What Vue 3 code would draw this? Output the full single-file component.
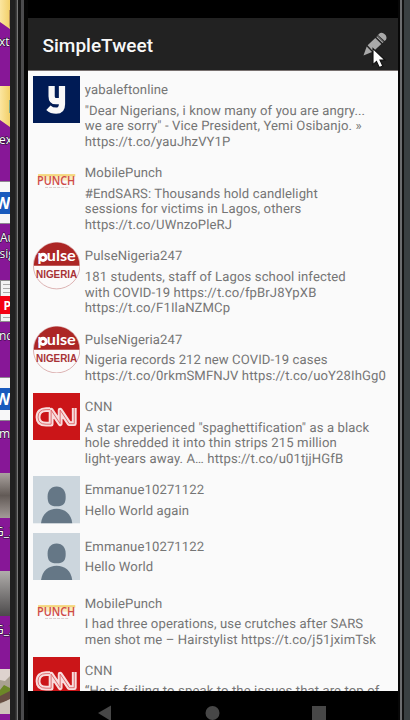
<script setup>
const tweets = [
  { name: 'yabaleftonline', avatar: 'yaba', lines: ['"Dear Nigerians, i know many of you are angry...', 'we are sorry" - Vice President, Yemi Osibanjo. »', 'https://t.co/yauJhzVY1P'] },
  { name: 'MobilePunch', avatar: 'punch', lines: ['#EndSARS: Thousands hold candlelight', 'sessions for victims in Lagos, others', 'https://t.co/UWnzoPleRJ'] },
  { name: 'PulseNigeria247', avatar: 'pulse', lines: ['181 students, staff of Lagos school infected', 'with COVID-19 https://t.co/fpBrJ8YpXB', 'https://t.co/F1IlaNZMCp'] },
  { name: 'PulseNigeria247', avatar: 'pulse', lines: ['Nigeria records 212 new COVID-19 cases', 'https://t.co/0rkmSMFNJV https://t.co/uoY28IhGg0'] },
  { name: 'CNN', avatar: 'cnn', lines: ['A star experienced "spaghettification" as a black', 'hole shredded it into thin strips 215 million', 'light-years away. A… https://t.co/u01tjjHGfB'] },
  { name: 'Emmanue10271122', avatar: 'person', lines: ['Hello World again'] },
  { name: 'Emmanue10271122', avatar: 'person', lines: ['Hello World'] },
  { name: 'MobilePunch', avatar: 'punch', lines: ['I had three operations, use crutches after SARS', 'men shot me – Hairstylist https://t.co/j51jximTsk'] },
  { name: 'CNN', avatar: 'cnn', lines: ['“He is failing to speak to the issues that are top of'] },
]
</script>

<template>
  <div class="stage">
    <svg class="desktop" width="10" height="720" viewBox="0 0 10 720">
      <defs>
        <linearGradient id="folder" x1="0" x2="1">
          <stop offset="0" stop-color="#fbe6a0" />
          <stop offset="1" stop-color="#f2cf68" />
        </linearGradient>
        <linearGradient id="photo" x1="0" y1="0" x2="0" y2="1">
          <stop offset="0" stop-color="#aaa39f" />
          <stop offset=".5" stop-color="#625a56" />
          <stop offset="1" stop-color="#a39b98" />
        </linearGradient>
        <linearGradient id="photo2" x1="0" y1="0" x2="0" y2="1">
          <stop offset="0" stop-color="#b0adab" />
          <stop offset="1" stop-color="#4c4a4b" />
        </linearGradient>
      </defs>
      <rect width="10" height="720" fill="#871797" />
      <path d="M0 0H10V29L0 22Z" fill="url(#folder)" />
      <path d="M9 10H10V28L9 26Z" fill="#b9925a" />
      <path d="M0 86H10V127L0 120Z" fill="url(#folder)" />
      <path d="M9 100H10V113H9Z" fill="#7fa98c" />
      <rect y="181" width="10" height="43" fill="#8d8790" />
      <rect y="182" width="10" height="41" fill="#f7f7f8" />
      <rect y="192" width="10" height="22" fill="#195abd" />
      <text x="-5" y="208.500" class="badge">W</text>
      <rect y="280" width="10" height="42" fill="#8e8e8e" />
      <rect x="1" y="281" width="9" height="40" fill="#f4f4f4" />
      <path d="M3 284.500H10M3 288.500H10M3 292.500H10M3 317.500H10" stroke="#aaa" />
      <rect y="296" width="10" height="18" fill="#f30012" />
      <text x="3.500" y="309.500" class="badge small">P</text>
      <rect y="377" width="10" height="44" fill="#8d8790" />
      <rect y="378" width="10" height="42" fill="#f7f7f8" />
      <rect y="388" width="10" height="22" fill="#195abd" />
      <text x="-5" y="404.500" class="badge">W</text>
      <rect y="473" width="10" height="45" fill="url(#photo)" />
      <rect y="571" width="10" height="45" fill="url(#photo2)" />
      <rect y="669" width="10" height="45" fill="#aaa192" />
      <path d="M0 669H10V676L5 681L0 680Z" fill="#ded3ce" />
      <path d="M0 690L4 685L10 688V696L5 697L0 701Z" fill="#6c8727" />
      <path d="M0 696L10 691V700L0 703Z" fill="#674d42" />
      <path d="M0 704L10 699V714H0Z" fill="#cfc4bb" />
      <g class="label">
        <text x="-1" y="46">xt</text>
        <text x="-1" y="143.500">ex</text>
        <text x="0" y="242">Au</text>
        <text x="-.5" y="257.500">sig</text>
        <text x="-1" y="340">nd</text>
        <text x="-1" y="438">m</text>
        <text x="-5" y="536">G_2</text>
        <text x="-5" y="634">G_2</text>
      </g>
    </svg>
    <div class="bezel left"></div>
    <main class="screen">
      <div class="status"></div>
      <header class="bar">
        <h1>SimpleTweet</h1>
        <svg class="compose" width="38" height="42" viewBox="0 0 38 42">
          <g fill="#a9a9a9">
            <path d="M8.500 28.500L11.700 19.500L17 25Z" />
            <path d="M12.600 18.300L20.300 10.900L26.300 17.100L18.300 24.400Z" />
            <path d="M24.200 6.800C27 3.500 33.500 8.700 31 12.700L29.700 14L23 7.900Z" />
            <path d="M21.300 10.100L22.200 9.200L28.400 15.200L27.500 16.100Z" />
          </g>
          <path d="M22.500 8.600L29.100 14.800" stroke="#777" stroke-width=".7" />
          <path d="M18 21.500V37.700L21.500 34.400L24.300 40.600L27.800 39L25 33H30Z" fill="#fff" stroke="#111" stroke-width="1.100" />
        </svg>
      </header>
      <section class="feed">
        <article v-for="(t, i) in tweets" :key="i" class="tweet">
          <svg v-if="t.avatar === 'yaba'" class="avatar" viewBox="0 0 47 47">
            <rect width="47" height="47" fill="#001b55" />
            <path d="M18.500 10V20Q18.500 25 23 25H27.500M28.800 10V28Q28.800 34.500 23 34.500Q18.500 34.500 15.300 31.500" fill="none" stroke="#f8f8f8" stroke-width="6.200" />
          </svg>
          <svg v-else-if="t.avatar === 'punch'" class="avatar" viewBox="0 0 47 47">
            <rect x="5" y="15" width="37" height="2.500" fill="#f4d77d" />
            <rect x="6" y="17.500" width="35" height="4" fill="#fae9bc" />
            <text x="4" y="26" class="punch" textLength="38" lengthAdjust="spacingAndGlyphs">PUNCH</text>
            <path d="M12 28.300H36" stroke="#d6c6c6" stroke-width=".9" stroke-dasharray="3 1" />
          </svg>
          <svg v-else-if="t.avatar === 'pulse'" class="avatar" viewBox="0 0 47 47">
            <circle cx="23.500" cy="23.500" r="23.100" fill="#fcfafa" stroke="#d5a2a2" stroke-width=".8" />
            <path d="M.8 23.500A22.700 23 0 0 1 46.200 23.500Z" fill="#ac2625" />
            <circle cx="10" cy="15.300" r="4.500" fill="#fff" />
            <text x="4.500" y="19.300" class="pulse" textLength="38" lengthAdjust="spacingAndGlyphs">pulse</text>
            <circle cx="10" cy="15.300" r="1.500" fill="#ac2625" />
            <text x="3" y="35.500" class="nigeria" textLength="41" lengthAdjust="spacingAndGlyphs">NIGERIA</text>
          </svg>
          <svg v-else-if="t.avatar === 'cnn'" class="avatar" viewBox="0 0 47 47">
            <rect width="47" height="47" fill="#cb1518" />
            <g fill="none" stroke-linejoin="round">
              <path d="M17 16.500H13Q5 16.500 5 24Q5 31 13 31H18V17L27 30.500V17L36 30.500H41V15" stroke="#f8dddd" stroke-width="4.800" />
              <path d="M17 16.500H13Q5 16.500 5 24Q5 31 13 31H18V17L27 30.500V17L36 30.500H41V15" stroke="#dc6264" stroke-width=".9" />
            </g>
          </svg>
          <svg v-else class="avatar" viewBox="0 0 47 47">
            <rect width="47" height="47" fill="#ccd6dd" />
            <path d="M23.500 10.500C29.500 10.500 32.500 15 32.500 20.500C32.500 27 30.500 30 23.500 30S14.500 27 14.500 20.500C14.500 15 17.500 10.500 23.500 10.500Z" fill="#657786" />
            <path d="M8 47C9 37.500 15.500 32.600 23.500 32.600S38 37.500 39 47Z" fill="#657786" />
          </svg>
          <div class="text">
            <div class="name">{{ t.name }}</div>
            <p><span v-for="(l, j) in t.lines" :key="j">{{ l }}</span></p>
          </div>
        </article>
      </section>
      <nav class="nav">
        <svg width="370" height="30" viewBox="0 0 370 30" fill="#474747">
          <path d="M70 22L83 14.500V30Z" />
          <circle cx="184.500" cy="22" r="7" />
          <rect x="284" y="15" width="14" height="14" />
        </svg>
      </nav>
    </main>
    <div class="bezel right"></div>
  </div>
</template>

<style>
body { margin: 0; }
</style>

<style scoped>
.stage {
  display: flex;
  width: 410px;
  height: 720px;
  overflow: hidden;
  background: #3a3f41;
  font-family: Roboto, "Liberation Sans", sans-serif;
}
.desktop { flex: none; display: block; }
.label {
  font: 12px "Open Sans", "Noto Sans", sans-serif;
  fill: #fff;
  stroke: #271030;
  stroke-width: 1.2px;
  paint-order: stroke;
}
.badge { font: 700 16px "Open Sans", sans-serif; fill: #fff; }
.badge.small { font-size: 12px; }
.bezel { flex: none; }
.left {
  width: 18px;
  background: linear-gradient(90deg, #202020 0 5px, #2c2c2c 5px 6px, #3d3d3d 6px 7px, #777 7px 8.5px, #161616 8.5px 11px, #4b4b4d 11px 14px, #050505 14px);
}
.right {
  width: 12px;
  background: linear-gradient(90deg, #070707 0 2px, #6b6c6e 2px 4px, #111 4px 6px, #3a4042 6px);
}
.screen {
  flex: none;
  width: 370px;
  display: flex;
  flex-direction: column;
  background: #000;
}
.status { height: 18px; flex: none; }
.bar {
  flex: none;
  box-sizing: border-box;
  height: 53px;
  padding: 0 5px 0 14.5px;
  display: flex;
  align-items: center;
  justify-content: space-between;
  background: #222;
  border-bottom: 1px solid #77706f;
}
h1 {
  margin: 0;
  padding-top: 3px;
  font-size: 19px;
  font-weight: 500;
  color: #f8f8f8;
}
.compose { display: block; margin-top: 7px; }
.feed {
  flex: none;
  box-sizing: border-box;
  height: 620px;
  padding-top: 0.4px;
  overflow: hidden;
  background: #fafafa;
}
.tweet {
  display: flex;
  gap: 5px;
  padding: 4.7px 0 4.7px 4.5px;
}
.avatar {
  flex: none;
  display: block;
  width: 47.3px;
  height: 47.3px;
}
.text {
  padding-top: 7px;
  margin-bottom: -0.95px;
  font-size: 13.1px;
  line-height: 15.77px;
  letter-spacing: 0.11px;
  text-rendering: geometricPrecision;
  color: #757575;
  white-space: nowrap;
}
p { margin: 4.7px 0 0; }
p span { display: block; }
.nav { flex: 1; }
.nav svg { display: block; }
.punch { font: 600 12.5px "Open Sans", sans-serif; fill: #cf4a48; }
.pulse { font: 700 15px Lato, sans-serif; fill: #fff; }
.nigeria { font: 700 10px "Liberation Sans", sans-serif; fill: #a83236; }
</style>
